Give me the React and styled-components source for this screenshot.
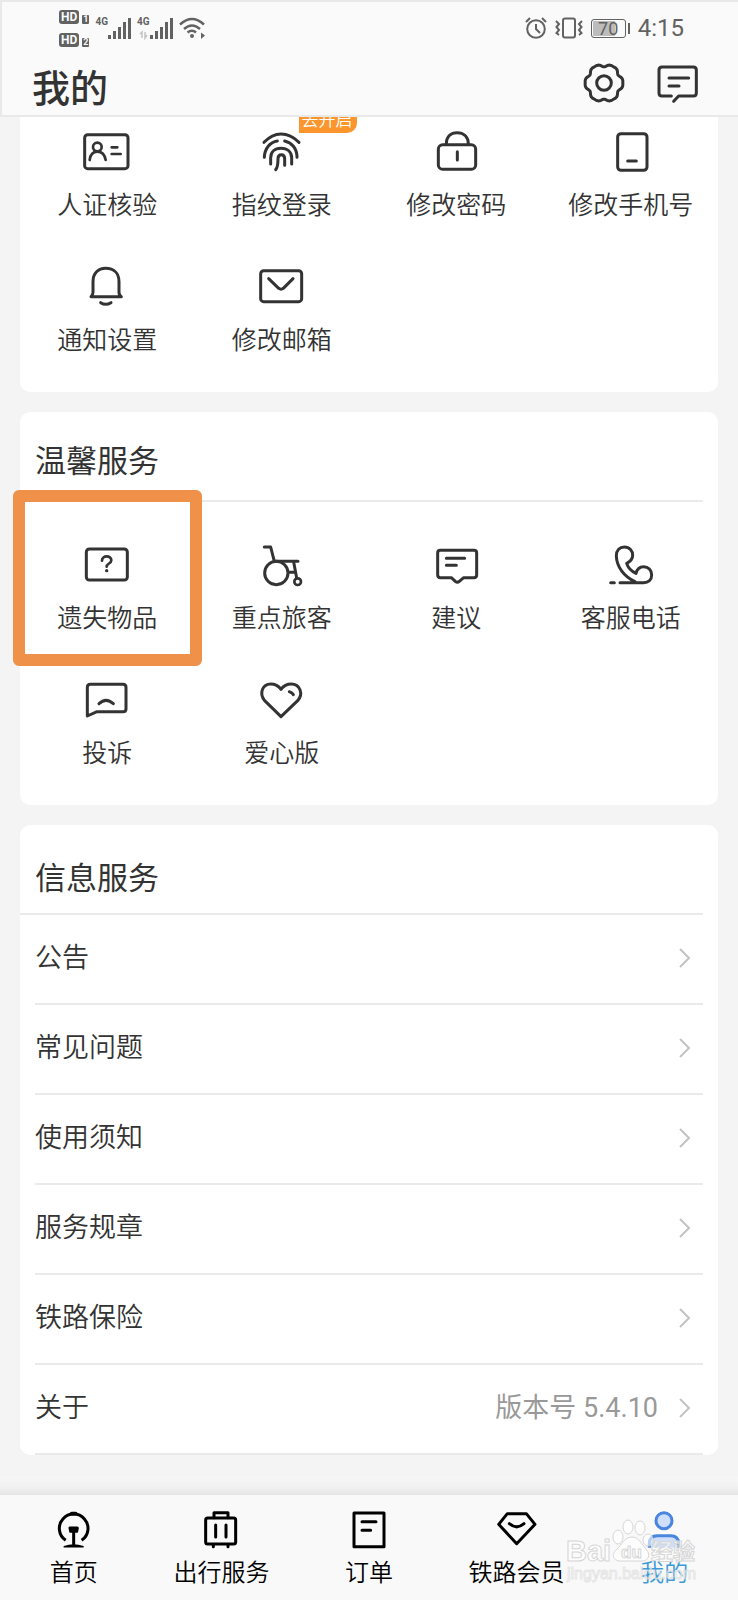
import styled, { createGlobalStyle, css } from "styled-components";

const GlobalStyle = createGlobalStyle`
  * {
    box-sizing: border-box;
  }
  body {
    margin: 0;
    background: #f4f4f4;
    color: #333333;
    font-family: Roboto, "Noto Sans CJK SC", sans-serif;
    font-weight: 350;
  }
  button {
    padding: 0;
    border: 0;
    background: none;
    color: inherit;
    font: inherit;
    cursor: pointer;
  }
  svg {
    display: block;
    flex: none;
  }
`;

const Wrapper = styled.div`
  display: flex;
  flex-direction: column;
  height: 100vh;
`;

const Header = styled.header`
  border: 2px solid #e9e9e9;
  border-right: 0;
  background: #fafafa;
`;
const StatusBar = styled.div`
  display: flex;
  justify-content: space-between;
  align-items: center;
  height: 52px;
  padding: 0 54px 0 57px;
  color: #626262;
`;
const StatusGroup = styled.div`
  display: flex;
  align-items: center;
  gap: ${({ $gap }) => $gap}px;
`;
const HdList = styled.div`
  display: flex;
  flex-direction: column;
  gap: 9px;
`;
const HdItem = styled.div`
  display: flex;
  align-items: flex-end;
  gap: 3px;
`;
const HdBadge = styled.span`
  padding: ${({ $small }) => ($small ? "0 1px" : "0 2px")};
  border-radius: ${({ $small }) => ($small ? 1 : 3)}px;
  background: #626262;
  color: #fafafa;
  font-size: ${({ $small }) => ($small ? 9 : 12)}px;
  font-weight: 700;
  line-height: ${({ $small }) => ($small ? 9 : 14)}px;
`;
const Signal = styled.div`
  display: flex;
  align-items: flex-start;
  font-size: 10px;
  font-weight: 700;
  line-height: 10px;

  svg {
    overflow: visible;
  }
`;
const Battery = styled.div`
  width: 35px;
  height: 19px;
  border: 1px solid #626262;
  border-radius: 3px;
  box-shadow: inset 0 0 0 1px #fafafa;
  background: linear-gradient(90deg, #bcbcbc 70%, #fafafa 70%);
  font-size: 18px;
  font-weight: 400;
  line-height: 18px;
  text-align: center;
`;
const BatteryWrapper = styled.div`
  display: flex;
  align-items: center;
  gap: 2px;

  &::after {
    content: "";
    width: 2px;
    height: 11px;
    background: #626262;
  }
`;
const Time = styled.span`
  font-size: 24px;
  font-weight: 400;
  line-height: 28px;
`;

const TitleBar = styled.div`
  display: flex;
  justify-content: space-between;
  align-items: center;
  height: 61px;
  padding: 0 36px 0 30px;
`;
const PageTitle = styled.h1`
  margin: 0;
  padding-top: 8px;
  font-size: 38px;
  font-weight: 500;
  line-height: 52px;
`;
const HeaderActions = styled.div`
  display: flex;
  gap: 26px;
  padding-bottom: 4px;
`;

const Main = styled.main`
  display: flex;
  flex: 1;
  flex-direction: column;
  gap: 20px;
  min-height: 0;
  padding: 0 20px;
  overflow: hidden;
`;
const Card = styled.section`
  flex: none;
  border-radius: ${({ $scrolled }) => ($scrolled ? "0 0 10px 10px" : "10px")};
  background: #ffffff;
`;
const CardTitle = styled.h2`
  height: 90px;
  margin: 0 15px 0 0;
  padding: ${({ $low }) => ($low ? 32 : 28)}px 0 0 15px;
  border-bottom: 2px solid #e9ebeb;
  font-size: 31px;
  font-weight: 400;
  line-height: 44px;
`;

const Grid = styled.div`
  display: grid;
  grid-template-columns: repeat(4, 1fr);
  row-gap: 39px;
  padding: ${({ $top }) => $top}px 0 33px;
`;
const GridItem = styled.button`
  position: relative;
  display: flex;
  flex-direction: column;
  align-items: center;
  gap: 12px;
  font-size: 25px;
  line-height: 36px;
  white-space: nowrap;

  ${({ $marked }) =>
    $marked &&
    css`
      &::after {
        content: "";
        position: absolute;
        inset: -51px -7px -29px;
        border: 12px solid #f0914a;
        border-radius: 6px;
      }
    `}
`;
const Badge = styled.span`
  position: absolute;
  top: -21px;
  left: 104px;
  padding: 0 4px 0 3px;
  border-radius: 10px 10px 10px 0;
  background: #fb962f;
  color: #ffffff;
  font-size: 17px;
  line-height: 26px;
`;

const List = styled.ul`
  margin: 0;
  padding: 0 15px;
  list-style: none;
`;
const ListLink = styled.a`
  display: flex;
  align-items: center;
  height: 90px;
  padding: 0 11px 2px 0;
  border-bottom: 2px solid #e9ebeb;
  color: inherit;
  font-size: 27px;
  line-height: 38px;
  text-decoration: none;
`;
const Note = styled.span`
  margin: 0 20px 0 auto;
  color: #999999;
  font-weight: 400;
`;
const ChevronWrapper = styled.span`
  margin-left: ${({ $afterNote }) => ($afterNote ? 0 : "auto")};
`;

const TabBar = styled.nav`
  position: relative;
  display: grid;
  grid-template-columns: repeat(5, 1fr);
  height: 105px;
  background: #f9f9f9;

  &::before {
    content: "";
    position: absolute;
    right: 0;
    bottom: 100%;
    left: 0;
    height: 18px;
    background: linear-gradient(#f6f6f6, #f2f2f2 50%, #e5e5e5);
  }
`;
const Tab = styled.a`
  display: flex;
  flex-direction: column;
  align-items: center;
  gap: 5px;
  padding-top: 8px;
  color: ${({ $active }) => ($active ? "#3f9ad8" : "#000000")};
  font-size: 24px;
  line-height: 34px;
  text-decoration: none;
  white-space: nowrap;
`;
const Watermark = styled.svg`
  position: absolute;
  right: 32px;
  bottom: 17px;
  pointer-events: none;
`;

// 6 lobes, one pointing right, with narrower notches between them
const gearPoints = Array.from({ length: 90 }, (_, i) => {
  const angle = (i * Math.PI) / 45;
  const r = 54 + 4 * Math.cos(6 * angle) - 1.5 * Math.cos(12 * angle);
  return `${(72 + r * Math.cos(angle)).toFixed(1)},${(
    72 +
    r * Math.sin(angle)
  ).toFixed(1)}`;
}).join(" ");

function Icon({ children, color = "#333333", width = 9 }) {
  return (
    <svg
      width="48"
      height="48"
      viewBox="0 0 144 144"
      fill="none"
      stroke={color}
      strokeWidth={width}
      strokeLinecap="round"
      strokeLinejoin="round"
      aria-hidden="true"
    >
      {children}
    </svg>
  );
}

const icons = {
  idCard: (
    <>
      <rect x="5" y="20" width="130" height="102" rx="9" />
      <circle cx="43" cy="57" r="13" strokeWidth="8" />
      <path d="M20 96C22 80 30 71 43 71C56 71 65 80 68 96" strokeWidth="8" />
      <path d="M86 58H103M86 78H113" strokeWidth="8" />
    </>
  ),
  fingerprint: (
    <path d="M18 43Q42 18 69 18Q98 18 123 43M19 88C20 62 36 42 58 39M80 39C102 44 117 62 117 88M38 108V90C38 72 50 61 69 61C88 61 101 72 101 90V108M53 125C60 118 60 108 60 92C60 83 65 80 70 80C75 80 80 83 80 92V112" />
  ),
  lock: (
    <>
      <rect x="19" y="50" width="112" height="74" rx="13" />
      <path d="M43 48C43 26 56 14 75 14C95 14 109 26 109 48M76 71V96" />
    </>
  ),
  mobile: (
    <>
      <rect x="32" y="17" width="88" height="110" rx="10" />
      <path d="M62 99H88" />
    </>
  ),
  bell: (
    <path d="M24 101H115C110 98 108 95 108 88V56C108 30 92 16 68 16C46 16 30 30 30 56V88C30 95 28 98 24 101ZM53 119Q68 129 84 119" />
  ),
  mail: (
    <>
      <rect x="8" y="23" width="123" height="93" rx="9" />
      <path d="M32 47L62 76Q69 81 76 76L105 47" />
    </>
  ),
  lost: (
    <>
      <rect x="10" y="24" width="123" height="93" rx="9" />
      <path d="M57 59C57 42 85 42 85 58C85 68 71 67 71 77" strokeWidth="8" />
      <circle cx="71" cy="89" r="5" fill="#333333" stroke="none" />
    </>
  ),
  wheelchair: (
    <>
      <path d="M19 18H38L49 61H120M107 63L116 111M92 94H111" />
      <circle cx="55" cy="96" r="35" />
      <circle cx="119" cy="122" r="10" strokeWidth="8" />
    </>
  ),
  suggestion: (
    <path d="M25 28H126Q134 28 134 36V102Q134 110 126 110H95L82 121Q76 126 70 121L58 110H25Q17 110 17 102V36Q17 28 25 28ZM43 52H98M43 73H73" />
  ),
  call: (
    <path d="M84 122C52 108 29 78 28 45C28 28 38 18 52 18C68 18 77 30 77 43C77 54 70 62 59 67C63 80 74 91 87 97C90 84 99 77 110 77C124 77 134 88 134 102C134 116 124 125 110 125H39M11 125H22" />
  ),
  complain: (
    <path d="M13 120V34Q13 25 22 25H120Q129 25 129 34V98Q129 107 120 107H42ZM48 83Q69 63 91 83" />
  ),
  heart: (
    <path d="M69 122L20 74C2 52 14 24 38 24C52 24 62 30 69 40C76 30 87 24 100 24C126 24 137 54 119 74ZM94 47Q103 49 106 56" />
  ),
};

const tabIcons = {
  home: (
    <>
      <path d="M47 112A43 43 0 1 1 95 112" strokeLinecap="butt" />
      <path d="M65 32H77" strokeWidth="11" />
      <path d="M60 75H82L80 85H62Z" fill="#000000" />
      <path d="M71 82V126" />
      <path d="M43 131Q71 121 99 131Z" fill="#000000" strokeWidth="5" />
    </>
  ),
  trip: (
    <>
      <rect x="26" y="45" width="90" height="78" rx="6" />
      <path d="M51 44V29H93V44M56 66V102M87 66V102M49 125V131M93 125V131" />
    </>
  ),
  order: <path d="M27 30H117V131H27ZM51 56H93M51 82H77" />,
  member: <path d="M43 32H100L126 64L71 122L17 64ZM49 62Q71 81 93 62" />,
  mine: (
    <>
      <circle cx="72" cy="53" r="24" fill="#cfdffa" />
      <path
        d="M28 134V122Q28 98 52 98H92Q116 98 116 122V134"
        fill="#cfdffa"
        strokeLinecap="butt"
      />
    </>
  ),
};

const accountItems = [
  { icon: "idCard", label: "人证核验" },
  { icon: "fingerprint", label: "指纹登录", badge: "去开启" },
  { icon: "lock", label: "修改密码" },
  { icon: "mobile", label: "修改手机号" },
  { icon: "bell", label: "通知设置" },
  { icon: "mail", label: "修改邮箱" },
];
const serviceItems = [
  { icon: "lost", label: "遗失物品", marked: true },
  { icon: "wheelchair", label: "重点旅客" },
  { icon: "suggestion", label: "建议" },
  { icon: "call", label: "客服电话" },
  { icon: "complain", label: "投诉" },
  { icon: "heart", label: "爱心版" },
];
const infoItems = [
  { label: "公告" },
  { label: "常见问题" },
  { label: "使用须知" },
  { label: "服务规章" },
  { label: "铁路保险" },
  { label: "关于", note: "版本号 5.4.10" },
];
const tabs = [
  { icon: "home", label: "首页" },
  { icon: "trip", label: "出行服务" },
  { icon: "order", label: "订单" },
  { icon: "member", label: "铁路会员" },
  { icon: "mine", label: "我的", active: true },
];

function ItemGrid({ items, top }) {
  return (
    <Grid $top={top}>
      {items.map(({ icon, label, badge, marked }) => (
        <GridItem type="button" key={label} $marked={marked}>
          <Icon>{icons[icon]}</Icon>
          <span>{label}</span>
          {badge && <Badge>{badge}</Badge>}
        </GridItem>
      ))}
    </Grid>
  );
}

function SignalBars({ data }) {
  return (
    <Signal>
      4G
      <svg
        width="23"
        height="22"
        viewBox="0 0 23 22"
        stroke="#626262"
        strokeWidth="3"
        aria-hidden="true"
      >
        <path d="M1.500 18V22M6.500 14V22M11.500 10V22M16.500 5V22M21.500 1V22" />
        {data && (
          <path
            d="M-10 17L-8 15V21M-5 15V21L-3 18"
            fill="none"
            stroke="#c4c4c4"
            strokeWidth="1.500"
          />
        )}
      </svg>
    </Signal>
  );
}

function Status() {
  return (
    <StatusBar>
      <StatusGroup $gap={6}>
        <HdList>
          {[1, 2].map((sim) => (
            <HdItem key={sim}>
              <HdBadge>HD</HdBadge>
              <HdBadge $small>{sim}</HdBadge>
            </HdItem>
          ))}
        </HdList>
        <SignalBars />
        <SignalBars data />
        <svg
          width="26"
          height="22"
          viewBox="0 0 26 22"
          fill="none"
          stroke="#626262"
          strokeWidth="2.5"
          aria-hidden="true"
        >
          <path d="M1 7.500Q13 -3.500 25 7.500M5 12Q13 5 21 12M8.500 15.500Q13 12 17 15.500" />
          <circle cx="13" cy="19" r="2" fill="#626262" stroke="none" />
          <path d="M22 15.500L26 18.500L22 22Z" fill="#626262" stroke="none" />
        </svg>
      </StatusGroup>
      <StatusGroup $gap={8}>
        <svg
          width="22"
          height="22"
          viewBox="0 0 22 22"
          fill="none"
          stroke="#626262"
          strokeWidth="2"
          aria-hidden="true"
        >
          <circle cx="11" cy="12" r="8.800" />
          <path d="M11 7V12L15 16M1 5L5 1M17 1L21 5" />
        </svg>
        <svg
          width="28"
          height="22"
          viewBox="0 0 28 22"
          fill="none"
          stroke="#626262"
          strokeWidth="2"
          aria-hidden="true"
        >
          <rect x="8" y="1.500" width="12" height="19" rx="2" />
          <path d="M1 4L4 7L1.500 10L4 13L1.500 16L4 18M27 4L24 7L26.500 10L24 13L26.500 16L24 18" />
        </svg>
        <BatteryWrapper>
          <Battery>70</Battery>
        </BatteryWrapper>
        <Time>4:15</Time>
      </StatusGroup>
    </StatusBar>
  );
}

function Chevron() {
  return (
    <svg
      width="14"
      height="22"
      viewBox="0 0 14 22"
      fill="none"
      stroke="#c2c2c2"
      strokeWidth="2"
      aria-hidden="true"
    >
      <path d="M2 2L11 11L2 20" />
    </svg>
  );
}

function App() {
  return (
    <Wrapper>
      <GlobalStyle />
      <Header>
        <Status />
        <TitleBar>
          <PageTitle>我的</PageTitle>
          <HeaderActions>
            <button type="button" aria-label="设置">
              <Icon>
                <polygon points={gearPoints} />
                <circle cx="72" cy="72" r="22" />
              </Icon>
            </button>
            <button type="button" aria-label="消息">
              <Icon>
                <path d="M52 111H24Q15 111 15 102V33Q15 24 24 24H118Q127 24 127 33V102Q127 111 118 111H74L59 127M45 57H104M45 81H75" />
              </Icon>
            </button>
          </HeaderActions>
        </TitleBar>
      </Header>
      <Main>
        <Card $scrolled>
          <ItemGrid items={accountItems} top={11} />
        </Card>
        <Card>
          <CardTitle>温馨服务</CardTitle>
          <ItemGrid items={serviceItems} top={39} />
        </Card>
        <Card>
          <CardTitle $low>信息服务</CardTitle>
          <List>
            {infoItems.map(({ label, note }) => (
              <li key={label}>
                <ListLink href="#">
                  {label}
                  {note && <Note>{note}</Note>}
                  <ChevronWrapper $afterNote={!!note}>
                    <Chevron />
                  </ChevronWrapper>
                </ListLink>
              </li>
            ))}
          </List>
        </Card>
      </Main>
      <TabBar>
        {tabs.map(({ icon, label, active }) => (
          <Tab href="#" key={label} $active={active}>
            <Icon color={active ? "#4a86e0" : "#000000"}>{tabIcons[icon]}</Icon>
            {label}
          </Tab>
        ))}
        <Watermark
          width="140"
          height="70"
          viewBox="0 0 140 70"
          fill="#ffffff"
          fillOpacity="0.6"
          stroke="#d6d6d6"
          strokeWidth="1"
          fontFamily='"Liberation Sans", "Noto Sans CJK SC", sans-serif'
          fontWeight="700"
          aria-hidden="true"
        >
          <text x="0" y="48" fontSize="29">
            Bai
          </text>
          <ellipse cx="52" cy="24" rx="5" ry="7" />
          <ellipse cx="62" cy="14" rx="5" ry="7" />
          <ellipse cx="74" cy="15" rx="5" ry="7" />
          <ellipse cx="82" cy="27" rx="5" ry="6" />
          <path d="M66 24C73 24 76 32 80 36C86 43 81 49 74 48H56C48 49 44 42 51 36C56 32 58 24 66 24Z" />
          <text x="55" y="45" fontSize="17">
            du
          </text>
          <text x="85" y="46" fontSize="22">
            经验
          </text>
          <text x="1" y="66" fontSize="16" fontWeight="400" strokeOpacity="0.6">
            jingyan.baidu.com
          </text>
        </Watermark>
      </TabBar>
    </Wrapper>
  );
}
export default App;
